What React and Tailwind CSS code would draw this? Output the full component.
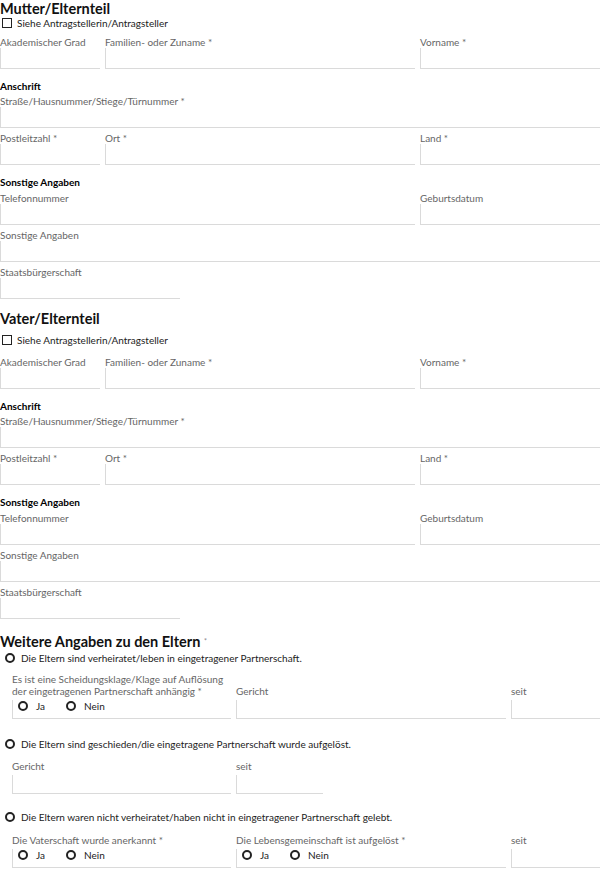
import React from "react";

const Field = ({ label, className = "", box = "h-[21px]" }) => (
  <div className={className}>
    <div className="h-[12px] text-[10px] leading-[12px] text-[#666] whitespace-nowrap">{label}</div>
    <div className={`${box} border-l border-b border-[#dadada]`} />
  </div>
);

const SubHead = ({ children, className = "" }) => (
  <div className={`h-[12px] text-[10px] leading-[12px] font-bold text-black ${className}`}>{children}</div>
);

const Circle = () => (
  <span className="h-[10px] w-[10px] shrink-0 rounded-full border-2 border-[#222]" />
);

const Radio = ({ label, className = "" }) => (
  <div className={`flex h-[12px] items-center gap-[6px] text-[10px] leading-[12px] text-[#222] ${className}`}>
    <Circle />
    <span className="whitespace-nowrap">{label}</span>
  </div>
);

const JaNein = () => (
  <div className="h-[19px] border-l border-b border-[#dadada]">
    <div className="flex h-[12px] items-center pl-[5px] text-[10px] leading-[12px] text-[#222]">
      <Circle />
      <span className="ml-[8px] w-[30px]">Ja</span>
      <Circle />
      <span className="ml-[8px]">Nein</span>
    </div>
  </div>
);

// Zelle im unteren Block, Label unten ausgerichtet
const Cell = ({ label, children }) => (
  <div className="flex flex-col justify-end">
    <div className="text-[10px] leading-[12px] text-[#666]">{label}</div>
    <div className="mt-[3px]">
      {children || <div className="h-[19px] border-l border-b border-[#dadada]" />}
    </div>
  </div>
);

const ParentSection = ({ title, className = "", checkGap = "mt-0", rowGap = "mt-[7px]" }) => (
  <section className={className}>
    <h2 className="h-[17px] text-[14.5px] leading-[17px] font-bold text-[#111]">{title}</h2>
    <div className={`${checkGap} flex h-[12px] items-center text-[10px] leading-[12px] text-[#222]`}>
      <span className="ml-[2px] h-[10px] w-[10px] border-[1.5px] border-[#222]" />
      <span className="ml-[5px]">Siehe Antragstellerin/Antragsteller</span>
    </div>

    <div className={`${rowGap} grid grid-cols-[100px_310px_1fr] gap-x-[5px]`}>
      <Field label="Akademischer Grad" />
      <Field label="Familien- oder Zuname *" />
      <Field label="Vorname *" />
    </div>

    <SubHead className="mt-[11px]">Anschrift</SubHead>
    <Field className="mt-[3px]" label="Straße/Hausnummer/Stiege/Türnummer *" />
    <div className="mt-[4px] grid grid-cols-[100px_310px_1fr] gap-x-[5px]">
      <Field label="Postleitzahl *" />
      <Field label="Ort *" />
      <Field label="Land *" />
    </div>

    <SubHead className="mt-[11px]">Sonstige Angaben</SubHead>
    <div className="mt-[4px] grid grid-cols-[415px_1fr] gap-x-[5px]">
      <Field label="Telefonnummer" />
      <Field label="Geburtsdatum" />
    </div>
    <Field className="mt-[4px]" label="Sonstige Angaben" />
    <Field className="mt-[4px] w-[180px]" label="Staatsbürgerschaft" />
  </section>
);

export default function App() {
  return (
    <div className="w-[600px] bg-white font-['Lato','Liberation_Sans',sans-serif] pb-[2px]">
      <ParentSection title="Mutter/Elternteil" />
      <ParentSection
        title="Vater/Elternteil"
        className="mt-[11px]"
        checkGap="mt-[7px]"
        rowGap="mt-[10px]"
      />

      <section className="mt-[14px]">
        <h2 className="h-[18px] text-[14.5px] leading-[18px] font-bold text-[#111]">
          Weitere Angaben zu den Eltern <sup className="text-[7px] font-normal text-[#888]">*</sup>
        </h2>

        <Radio className="mt-[1px] ml-[5px]" label="Die Eltern sind verheiratet/leben in eingetragener Partnerschaft." />
        <div className="mt-[9px] pl-[12px] grid grid-cols-[219px_270px_1fr] gap-x-[5px]">
          <Cell label={<>Es ist eine Scheidungsklage/Klage auf Auflösung<br />der eingetragenen Partnerschaft anhängig *</>}>
            <JaNein />
          </Cell>
          <Cell label="Gericht" />
          <Cell label="seit" />
        </div>

        <Radio className="mt-[19px] ml-[5px]" label="Die Eltern sind geschieden/die eingetragene Partnerschaft wurde aufgelöst." />
        <div className="mt-[10px] pl-[12px] grid grid-cols-[219px_87px] gap-x-[5px]">
          <Cell label="Gericht" />
          <Cell label="seit" />
        </div>

        <Radio className="mt-[17px] ml-[5px]" label="Die Eltern waren nicht verheiratet/haben nicht in eingetragener Partnerschaft gelebt." />
        <div className="mt-[11px] pl-[12px] grid grid-cols-[219px_270px_1fr] gap-x-[5px]">
          <Cell label="Die Vaterschaft wurde anerkannt *">
            <JaNein />
          </Cell>
          <Cell label="Die Lebensgemeinschaft ist aufgelöst *">
            <JaNein />
          </Cell>
          <Cell label="seit" />
        </div>
      </section>
    </div>
  );
}
